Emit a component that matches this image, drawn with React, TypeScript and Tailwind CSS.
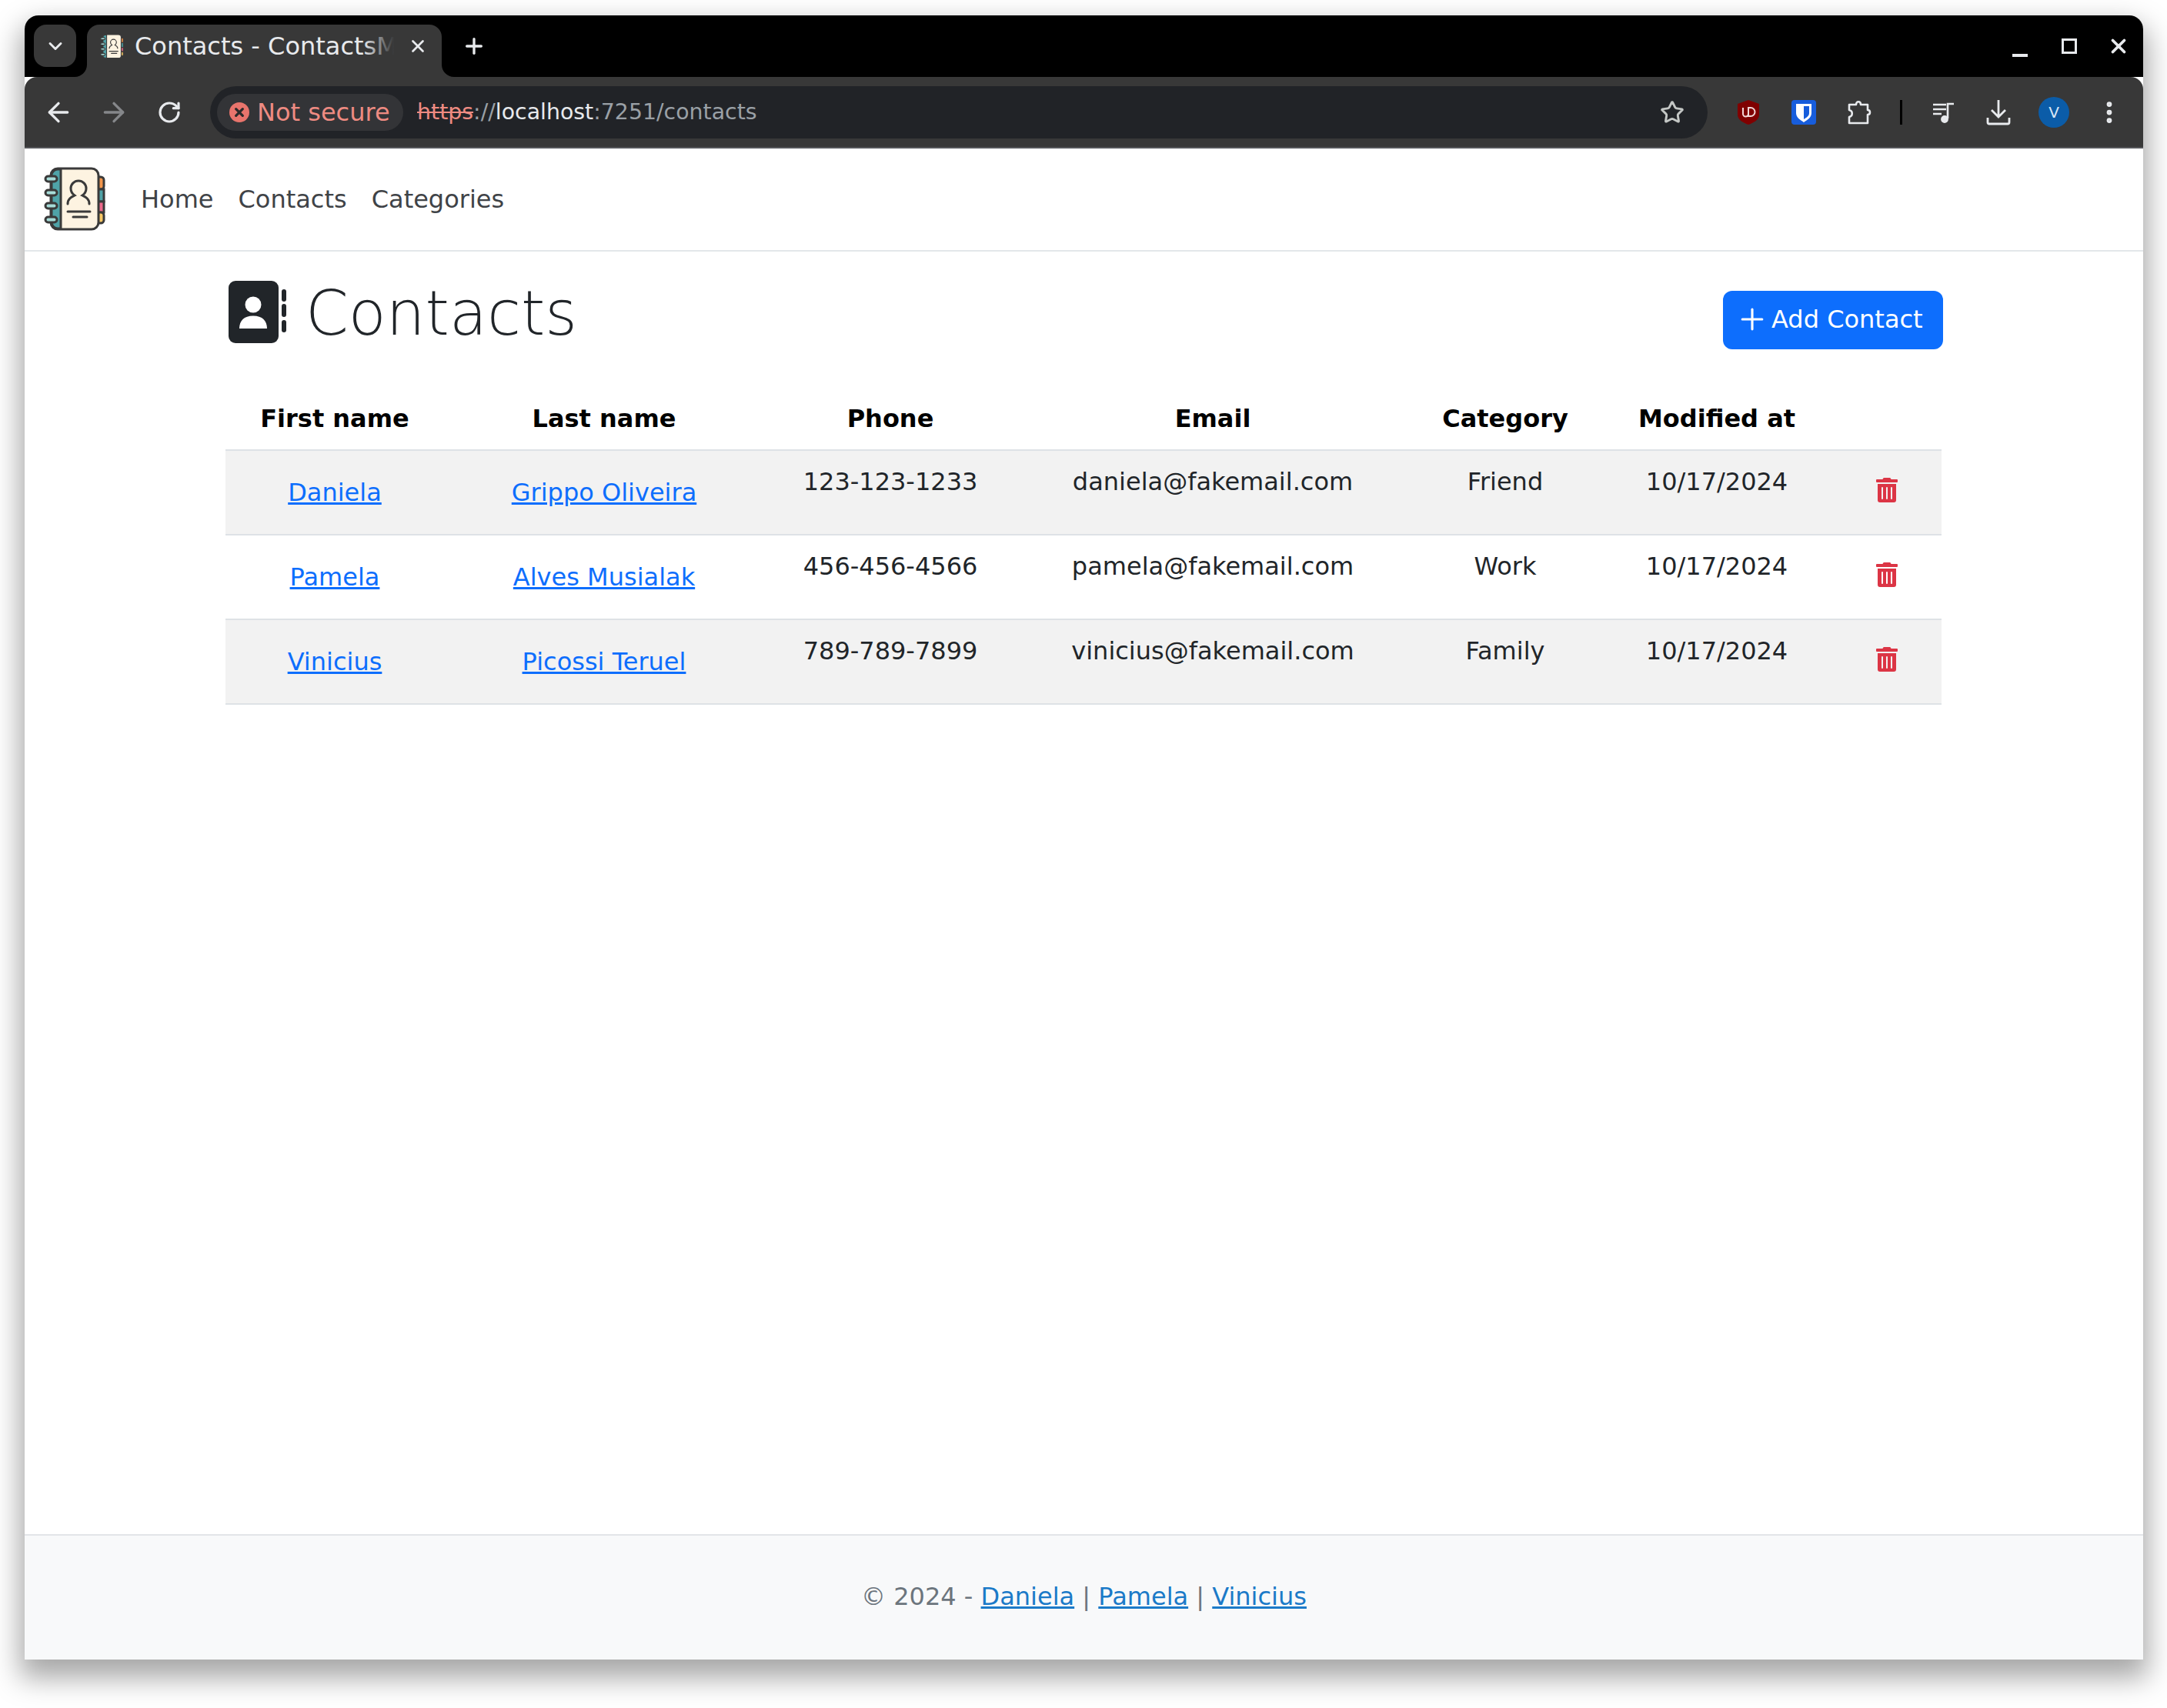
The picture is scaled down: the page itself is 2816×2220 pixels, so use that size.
import { FaTrashAlt } from 'react-icons/fa';
import { ArrowLeft, ArrowRight, ChevronDown, EllipsisVertical, Plus, RotateCw, Star, X } from 'lucide-react';

const contacts = [
  { first: 'Daniela', last: 'Grippo Oliveira', phone: '123-123-1233', email: 'daniela@fakemail.com', category: 'Friend' },
  { first: 'Pamela', last: 'Alves Musialak', phone: '456-456-4566', email: 'pamela@fakemail.com', category: 'Work' },
  { first: 'Vinicius', last: 'Picossi Teruel', phone: '789-789-7899', email: 'vinicius@fakemail.com', category: 'Family' },
];

function Logo({ className }: { className: string }) {
  return (
    <svg viewBox="0 0 80 84" className={className}>
      <g stroke="#3a3a3a" strokeWidth="3">
        <rect x="62" y="13" width="16" height="16" rx="4" fill="#f2954b" />
        <rect x="62" y="29" width="16" height="16" fill="#4fa3a8" />
        <rect x="62" y="45" width="16" height="14" fill="#ee6a8c" />
        <rect x="62" y="59" width="16" height="14" rx="4" fill="#f7c765" />
        <rect x="9" y="2" width="62" height="79" rx="9" fill="#fdf3e1" />
        <path d="M22 3 H18 a8 8 0 0 0 -8 8 V72 a8 8 0 0 0 8 8 h4 Z" fill="#4fa3a8" />
      </g>
      <g fill="#a6dcd8" stroke="#3a3a3a" strokeWidth="3">
        <rect x="2" y="12" width="15" height="7" rx="3.5" />
        <rect x="2" y="30" width="15" height="7" rx="3.5" />
        <rect x="2" y="47" width="15" height="7" rx="3.5" />
        <rect x="2" y="65" width="15" height="7" rx="3.5" />
      </g>
      <g fill="none" stroke="#3a3a3a" strokeWidth="3" strokeLinecap="round">
        <path d="M31 48 c0-7 5-9 9-11 c-3-2-5-5-5-9 a10 10 0 0 1 20 0 c0 4-2 7-5 9 c4 2 9 4 9 11" />
        <path d="M31 58 H60" />
        <path d="M38 65 H56" />
      </g>
    </svg>
  );
}

function AddressBookIcon() {
  return (
    <svg viewBox="0 0 76 81" className="ml-[4px] mb-[5px] h-[81px] w-[76px] shrink-0">
      <rect width="65" height="81" rx="9" fill="#212529" />
      <circle cx="32" cy="31" r="10.5" fill="#fff" />
      <path d="M14 62 C14 52 20 45.5 32 45.5 C44 45.5 50 52 50 62 Z" fill="#fff" />
      <rect x="69" y="11" width="6" height="16" rx="3" fill="#212529" />
      <rect x="69" y="30" width="6" height="17" rx="3" fill="#212529" />
      <rect x="69" y="51" width="6" height="16" rx="3" fill="#212529" />
    </svg>
  );
}

function Flare({ side }: { side: 'left' | 'right' }) {
  return (
    <svg viewBox="0 0 16 16" className={side === 'left' ? 'absolute bottom-0 -left-4 h-4 w-4' : 'absolute bottom-0 -right-4 h-4 w-4'}>
      <path d={side === 'left' ? 'M16 0 A16 16 0 0 1 0 16 H16 Z' : 'M0 0 A16 16 0 0 0 16 16 H0 Z'} fill="#383838" />
    </svg>
  );
}

function BrowserChrome() {
  return (
    <div className="font-['DejaVu_Sans',sans-serif]">
      <div className="flex h-[80px] items-start rounded-t-[18px] bg-black pl-3 pt-3">
        <div className="flex h-[55px] w-[55px] items-center justify-center rounded-[16px] bg-[#383838]">
          <ChevronDown className="h-7 w-7 text-[#e8eaed]" strokeWidth={2.5} />
        </div>
        <div className="relative ml-[14px] flex h-[68px] w-[461px] items-start rounded-t-[16px] bg-[#383838] pl-[17px] pt-[12px]">
          <Flare side="left" />
          <Flare side="right" />
          <Logo className="h-[33px] w-[31px] shrink-0" />
          <div className="relative ml-[14px] h-[32px] w-[337px] overflow-hidden whitespace-nowrap text-[32px] leading-[32px] text-[#e8eaed]">
            Contacts - ContactsM
            <div className="absolute inset-y-0 right-0 w-[40px] bg-gradient-to-r from-transparent to-[#383838]" />
          </div>
          <X className="ml-[18px] mt-[3px] h-[26px] w-[26px] shrink-0 text-[#e8eaed]" strokeWidth={2.5} />
        </div>
        <Plus className="ml-[26px] mt-[12px] h-[32px] w-[32px] text-[#e8eaed]" strokeWidth={2.5} />
        <div className="ml-auto flex items-center pt-[12px]">
          <div className="flex h-[32px] w-[64px] items-end justify-center pb-[2px]">
            <div className="h-[4px] w-[20px] bg-[#e8eaed]" />
          </div>
          <div className="flex h-[32px] w-[64px] items-center justify-center">
            <div className="h-[20px] w-[20px] border-[3px] border-[#e8eaed]" />
          </div>
          <div className="flex h-[32px] w-[64px] items-center justify-center">
            <X className="h-[30px] w-[30px] text-[#e8eaed]" strokeWidth={3} />
          </div>
        </div>
      </div>
      <div className="flex h-[93px] items-center rounded-t-[16px] border-b-2 border-[#55565a] bg-[#383838] pl-2 pr-2">
        <div className="flex w-[72px] justify-center">
          <ArrowLeft className="h-10 w-10 text-[#e8eaed]" strokeWidth={2} />
        </div>
        <div className="flex w-[72px] justify-center">
          <ArrowRight className="h-10 w-10 text-[#85878a]" strokeWidth={2} />
        </div>
        <div className="flex w-[72px] justify-center">
          <RotateCw className="h-8 w-8 text-[#e8eaed]" strokeWidth={2.4} />
        </div>
        <div className="ml-[17px] flex h-[68px] w-[1946px] items-center rounded-full bg-[#212327] pl-[9px] pr-[30px]">
          <div className="flex h-[48px] w-[242px] items-center rounded-full bg-[#333437] pl-[16px]">
            <svg viewBox="0 0 24 24" className="h-[26px] w-[26px] shrink-0">
              <circle cx="12" cy="12" r="12" fill="#e8746c" />
              <path d="M8 8 L16 16 M16 8 L8 16" stroke="#2a2a2a" strokeWidth="3" strokeLinecap="round" />
            </svg>
            <span className="ml-[10px] whitespace-nowrap text-[32px] text-[#ee8b82]">Not secure</span>
          </div>
          <div className="ml-[18px] whitespace-nowrap pt-[2px] text-[28.4px] text-[#9aa0a6]">
            <span className="text-[#ee8b82] line-through">https</span>://<span className="text-[#e8eaed]">localhost</span>:7251/contacts
          </div>
          <Star className="ml-auto h-[32px] w-[32px] text-[#c4c7c5]" strokeWidth={2.2} />
        </div>
        <div className="ml-[17px] flex w-[72px] justify-center">
          <svg viewBox="0 0 30 34" className="h-[34px] w-[30px]">
            <path d="M15 1 L29 6 V20 C29 27 21 31 15 33 C9 31 1 27 1 20 V6 Z" fill="#800000" />
            <path d="M8 11 V19 a3.5 3.5 0 0 0 7 0 V11 M15 11 h3 a5 5 0 0 1 0 11 h-3 Z" fill="none" stroke="#f1d6d6" strokeWidth="2" />
          </svg>
        </div>
        <div className="flex w-[72px] justify-center">
          <svg viewBox="0 0 32 32" className="h-[32px] w-[32px]">
            <rect width="32" height="32" rx="4" fill="#175ddc" />
            <path d="M6 5 H26 V17 C26 23 20 26 16 29 C12 26 6 23 6 17 Z" fill="#fff" />
            <path d="M16 8 H23 V17 C23 21 19 23 16 25 Z" fill="#175ddc" />
          </svg>
        </div>
        <div className="flex w-[72px] justify-center">
          <svg viewBox="0 0 32 34" className="h-[34px] w-[32px]" fill="none" stroke="#e8eaed" strokeWidth="2.6" strokeLinejoin="round">
            <path d="M3 7 H12 C12 2 18 2 18 7 H27 V14 C31 14 31 20 27 20 V31 H3 V23 C8 22 8 15 3 14 Z" />
          </svg>
        </div>
        <div className="mx-[17px] h-[32px] w-[3px] bg-black" />
        <div className="flex w-[72px] justify-center">
          <svg viewBox="0 0 32 32" className="h-[32px] w-[32px]" fill="none" stroke="#e8eaed" strokeWidth="2.6">
            <path d="M3 6 H20 M3 12 H20 M3 18 H14" />
            <path d="M22 24 V5 H30" />
            <circle cx="18" cy="25" r="3.6" fill="#e8eaed" />
          </svg>
        </div>
        <div className="flex w-[72px] justify-center">
          <svg viewBox="0 0 32 34" className="h-[34px] w-[32px]" fill="none" stroke="#e8eaed" strokeWidth="2.8">
            <path d="M16 1 V22 M7 14 L16 23 L25 14" />
            <path d="M2 24 V30 a2 2 0 0 0 2 2 H28 a2 2 0 0 0 2-2 V24" />
          </svg>
        </div>
        <div className="flex w-[72px] justify-center">
          <div className="flex h-[40px] w-[40px] items-center justify-center rounded-full bg-[#0b5ca8] text-[20px] text-[#d7e6f7]">V</div>
        </div>
        <div className="flex w-[72px] justify-center">
          <EllipsisVertical className="h-[36px] w-[36px] text-[#e8eaed]" strokeWidth={2.5} />
        </div>
      </div>
    </div>
  );
}

function ContactsTable() {
  return (
    <table className="w-[2230px] table-fixed border-collapse text-center text-[32px] leading-[48px] text-[#212529]">
      <colgroup>
        <col className="w-[284px]" />
        <col className="w-[416px]" />
        <col className="w-[328px]" />
        <col className="w-[510px]" />
        <col className="w-[250px]" />
        <col className="w-[300px]" />
        <col className="w-[142px]" />
      </colgroup>
      <thead>
        <tr className="border-b-2 border-[#dee2e6] text-black">
          <th className="p-4 font-bold">First name</th>
          <th className="p-4 font-bold">Last name</th>
          <th className="p-4 font-bold">Phone</th>
          <th className="p-4 font-bold">Email</th>
          <th className="p-4 font-bold">Category</th>
          <th className="p-4 font-bold">Modified at</th>
          <th className="p-4" />
        </tr>
      </thead>
      <tbody>
        {contacts.map((c, i) => (
          <tr key={c.first} className={i % 2 === 0 ? 'h-[110px] border-b-2 border-[#dee2e6] bg-[#f2f2f2]' : 'h-[110px] border-b-2 border-[#dee2e6]'}>
            <td className="p-4 align-middle">
              <a href="#" className="text-[#0d6efd] underline">{c.first}</a>
            </td>
            <td className="p-4 align-middle">
              <a href="#" className="text-[#0d6efd] underline">{c.last}</a>
            </td>
            <td className="p-4 align-top">{c.phone}</td>
            <td className="p-4 align-top">{c.email}</td>
            <td className="p-4 align-top">{c.category}</td>
            <td className="p-4 align-top">10/17/2024</td>
            <td className="p-4 align-middle">
              <FaTrashAlt className="mx-auto mb-[6px] h-[32px] w-[28px] text-[#dc3545]" />
            </td>
          </tr>
        ))}
      </tbody>
    </table>
  );
}

export default function App() {
  return (
    <div className="min-h-screen bg-white pl-[32px] pt-[20px] font-['DejaVu_Sans',sans-serif]">
      <div className="flex h-[2137px] w-[2753px] flex-col rounded-t-[18px] bg-white shadow-[0_18px_36px_6px_rgba(0,0,0,0.35)]">
        <BrowserChrome />
        <nav className="flex h-[134px] items-center border-b-2 border-[#e3e7ea] pl-[25px] text-[32px] text-[#3f4347]">
          <Logo className="h-[84px] w-[80px]" />
          <div className="ml-[46px] flex gap-[32px]">
            <a href="#">Home</a>
            <a href="#">Contacts</a>
            <a href="#">Categories</a>
          </div>
        </nav>
        <main className="flex-1 pl-[261px] pr-[260px]">
          <div className="flex items-start justify-between pt-[33px]">
            <div className="flex items-center">
              <AddressBookIcon />
              <h1 className="ml-[24px] text-[80px] font-extralight leading-[96px] text-[#212529]">Contacts</h1>
            </div>
            <button className="mt-[18px] flex h-[76px] w-[286px] items-center gap-[3px] rounded-[12px] bg-[#0d6efd] pb-[2px] pl-[16px] text-[32px] text-white">
              <Plus className="h-[44px] w-[44px]" strokeWidth={1.7} />
              Add Contact
            </button>
          </div>
          <div className="mt-[48px]">
            <ContactsTable />
          </div>
        </main>
        <footer className="flex h-[163px] items-center justify-center border-t-2 border-[#e3e5e8] bg-[#f8f9fa] pb-[3px] text-[32px] text-[#6c757d]">
          <p>
            © 2024 - <a href="#" className="text-[#1b7ac8] underline">Daniela</a> | <a href="#" className="text-[#1b7ac8] underline">Pamela</a> | <a href="#" className="text-[#1b7ac8] underline">Vinicius</a>
          </p>
        </footer>
      </div>
    </div>
  );
}
